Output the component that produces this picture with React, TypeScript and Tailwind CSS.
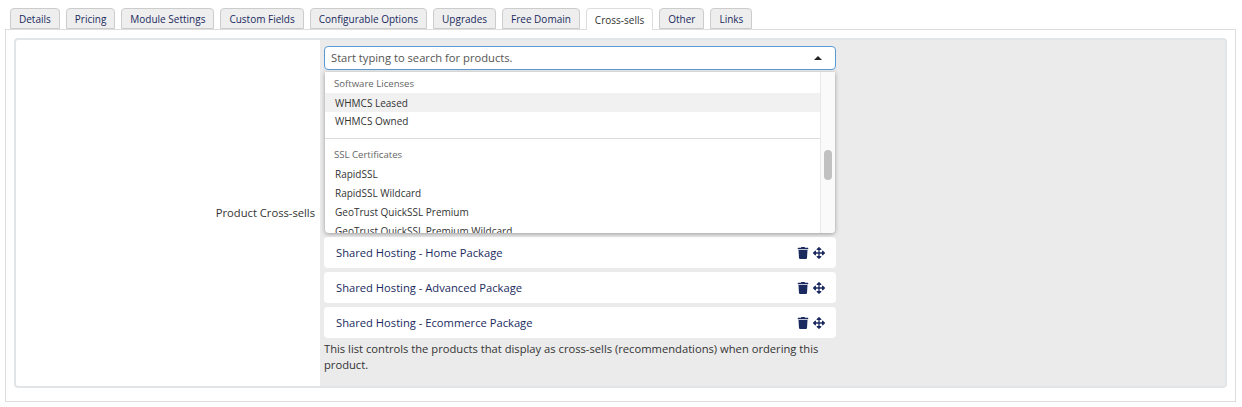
import { FaArrowsAlt, FaTrash } from 'react-icons/fa'

const tabs = [
  'Details',
  'Pricing',
  'Module Settings',
  'Custom Fields',
  'Configurable Options',
  'Upgrades',
  'Free Domain',
  'Cross-sells',
  'Other',
  'Links',
]

const products = [
  'Shared Hosting - Home Package',
  'Shared Hosting - Advanced Package',
  'Shared Hosting - Ecommerce Package',
]

function Tab({ label }: { label: string }) {
  const active = label === 'Cross-sells'
  return (
    <div
      className={
        active
          ? 'relative z-10 -mb-px flex h-[22px] items-center rounded-t border border-b-0 border-[#ddd] bg-white px-[8px] text-[#333]'
          : 'flex h-[21px] items-center rounded-t border border-[#ccc] bg-[#eee] px-[8px] text-[#1a2a5e]'
      }
    >
      {label}
    </div>
  )
}

function ProductRow({ name }: { name: string }) {
  return (
    <div className="flex h-[31px] items-center justify-between rounded bg-white pl-3 pr-[11px] text-[#1a2a5e]">
      <span>{name}</span>
      <span className="flex items-center gap-[4px] text-[12px]">
        <FaTrash />
        <FaArrowsAlt />
      </span>
    </div>
  )
}

function OptionGroup({ title, items }: { title: string; items: string[] }) {
  return (
    <div>
      <div className="flex h-[19px] items-center px-[9px] text-[9.6px] text-[#666]">{title}</div>
      {items.map((item) => (
        <div
          key={item}
          className={`flex h-[19px] items-center pl-[10px] pr-[9px] text-[10px] text-[#333] ${item === 'WHMCS Leased' ? 'bg-[#f1f1f1]' : ''} ${item === 'WHMCS Owned' ? 'pb-[2px]' : ''}`}
        >
          {item}
        </div>
      ))}
    </div>
  )
}

export default function App() {
  return (
    <div className="h-[407px] w-[1242px] overflow-hidden bg-white pl-[5px] pr-[6px] pt-[8px] font-['Open_Sans',sans-serif] text-[11.2px] leading-4 text-[#333]">
      <div className="flex items-end gap-[6px] pl-[5px] text-[10px]">
        {tabs.map((tab) => (
          <Tab key={tab} label={tab} />
        ))}
      </div>
      <div className="h-[373px] border border-[#ddd] bg-white pb-[13px] pl-[8px] pr-[8px] pt-[8px]">
        <div className="flex h-[350px] rounded-sm border-2 border-[#e1e5e8]">
          <div className="flex w-[304px] shrink-0 items-center justify-end pr-[5px]">Product Cross-sells</div>
          <div className="relative flex-1 bg-[#ebebeb] pl-[4px] pt-[6px]">
            <div className="w-[512px]">
              <div className="flex h-[24px] items-center justify-between rounded-sm border border-[#5b9bd5] bg-white px-[6px] text-[#555]">
                <span>Start typing to search for products.</span>
                <span className="mr-[7px] h-0 w-0 border-x-[4px] border-b-[4px] border-x-transparent border-b-[#222]" />
              </div>
              <div className="mt-[167px] flex flex-col gap-[4px]">
                {products.map((name) => (
                  <ProductRow key={name} name={name} />
                ))}
              </div>
              <p className="mt-[3px]">
                This list controls the products that display as cross-sells (recommendations) when ordering this product.
              </p>
            </div>
            <div className="absolute left-[5px] top-[32px] flex h-[161px] w-[510px] overflow-hidden rounded-b-sm bg-white shadow-[0_1px_4px_rgba(0,0,0,0.35)]">
              <div className="flex-1 overflow-hidden pt-[2px]">
                <OptionGroup title="Software Licenses" items={['WHMCS Leased', 'WHMCS Owned']} />
                <div className="mb-[6px] mt-[7px] border-t border-[#ddd]" />
                <OptionGroup
                  title="SSL Certificates"
                  items={['RapidSSL', 'RapidSSL Wildcard', 'GeoTrust QuickSSL Premium', 'GeoTrust QuickSSL Premium Wildcard']}
                />
              </div>
              <div className="w-[15px] shrink-0 border-l border-[#e8e8e8] bg-[#fafafa] pl-[3px] pt-[78px]">
                <div className="h-[30px] w-[8px] rounded bg-[#c1c1c1]" />
              </div>
            </div>
          </div>
        </div>
      </div>
    </div>
  )
}
